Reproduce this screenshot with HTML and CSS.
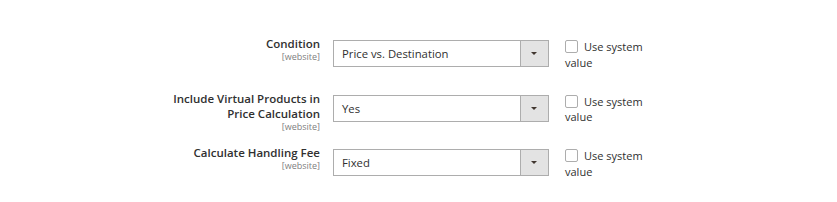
FILE: index.html
```html
<!DOCTYPE html>
<html>
<head>
<meta charset="utf-8">
<link rel="stylesheet" href="styles.css">
</head>
<body>
<div class="form">
  <div class="field">
    <div class="label"><span class="name">Condition</span><span class="scope">[website]</span></div>
    <div class="control"><div class="select"><span class="value">Price vs. Destination</span><span class="arrow"></span></div></div>
    <label class="usesys"><span class="box"></span>Use system value</label>
  </div>
  <div class="field">
    <div class="label"><span class="name">Include Virtual Products in Price Calculation</span><span class="scope">[website]</span></div>
    <div class="control"><div class="select"><span class="value">Yes</span><span class="arrow"></span></div></div>
    <label class="usesys"><span class="box"></span>Use system value</label>
  </div>
  <div class="field">
    <div class="label"><span class="name">Calculate Handling Fee</span><span class="scope">[website]</span></div>
    <div class="control"><div class="select"><span class="value">Fixed</span><span class="arrow"></span></div></div>
    <label class="usesys"><span class="box"></span>Use system value</label>
  </div>
</div>
</body>
</html>
```
FILE: styles.css
```css
html, body {
  margin: 0;
  background: #ffffff;
}
body {
  font-family: "Open Sans", "DejaVu Sans", sans-serif;
  color: #303030;
  width: 837px;
  height: 202px;
  overflow: hidden;
}
.form {
  padding: 36px 0 0 165px;
}
.field {
  display: grid;
  grid-template-columns: 168px 216px 92px;
  column-gap: 0;
  min-height: 54.5px;
  align-items: start;
}
.label {
  text-align: right;
  padding-right: 13px;
  display: flex;
  flex-direction: column;
  align-items: flex-end;
}
.name {
  font-size: 11.5px;
  font-weight: 600;
  line-height: 15px;
  color: #303030;
}
.scope {
  font-size: 9px;
  line-height: 11px;
  color: #808080;
}
.control {
  padding-top: 4px;
}
.select {
  display: flex;
  height: 27px;
  box-sizing: border-box;
  border: 1px solid #adadad;
  background: #fff;
}
.value {
  flex: 1;
  font-size: 11.3px;
  line-height: 25px;
  padding-left: 8px;
  color: #303030;
}
.arrow {
  width: 27px;
  background: #e3e3e3;
  border-left: 1px solid #adadad;
  position: relative;
}
.arrow::after {
  content: "";
  position: absolute;
  left: 10px;
  top: 11px;
  border-left: 3px solid transparent;
  border-right: 3px solid transparent;
  border-top: 3.5px solid #41362f;
}
.usesys {
  margin-left: 16px;
  padding-top: 3px;
  font-size: 11px;
  line-height: 15.5px;
  color: #303030;
  width: 90px;
}
.box {
  display: inline-block;
  width: 11px;
  height: 11px;
  border: 1px solid #adadad;
  border-radius: 2px;
  background: #fff;
  vertical-align: -2px;
  margin-right: 6px;
}
```
